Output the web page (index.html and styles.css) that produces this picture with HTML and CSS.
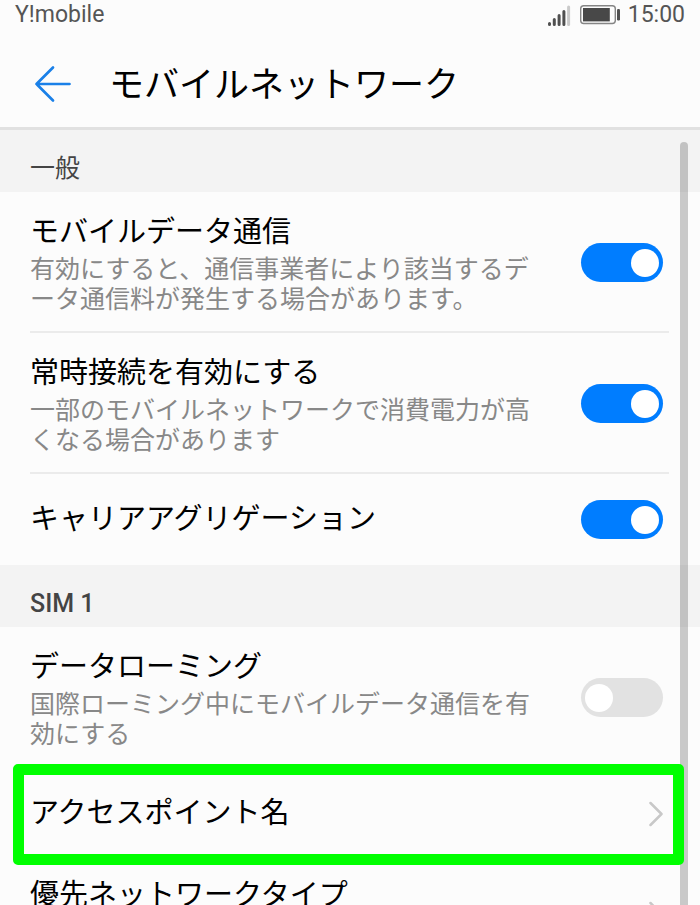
FILE: index.html
```html
<!DOCTYPE html>
<html lang="ja">
<head>
    <meta charset="utf-8">
    <meta name="viewport" content="width=device-width, initial-scale=1">
    <title>モバイルネットワーク</title>
    <link rel="stylesheet" href="styles.css">
</head>
<body>
    <div class="status-bar">
        <span class="carrier">Y!mobile</span>
        <svg class="signal" width="24" height="24" viewBox="0 0 24 24" aria-hidden="true">
            <g stroke="#505050" stroke-width="3" stroke-linecap="round">
                <path d="M2.5 20.5V21.5M7.3 16.5V21.5M12.1 12.5V21.5M16.9 8.5V21.5"/>
                <path d="M21.6 4V21.5" stroke="#cacaca"/>
            </g>
        </svg>
        <svg class="battery" width="42" height="24" viewBox="0 0 42 24" aria-hidden="true">
            <rect x="1.7" y="2.7" width="34.6" height="17.8" rx="3" fill="none" stroke="#858585" stroke-width="1.4"/>
            <rect x="4" y="5" width="26.8" height="13.4" fill="#484848"/>
            <rect x="38" y="6" width="3" height="11.5" rx="1.2" fill="#505050"/>
        </svg>
        <span class="clock">15:00</span>
    </div>

    <header class="header">
        <button class="back" type="button" aria-label="戻る">
            <svg width="38" height="38" viewBox="0 0 38 38" aria-hidden="true">
                <path d="M19 2.5L2.5 19L19 35.5M2.5 19H35.5" fill="none" stroke="#1a80e8" stroke-width="2.7" stroke-linecap="round" stroke-linejoin="round"/>
            </svg>
        </button>
        <h1>モバイルネットワーク</h1>
    </header>

    <main class="settings">
        <section>
            <h2 class="general">一般</h2>
            <label class="row">
                <span class="text">
                    <span class="name">モバイルデータ通信</span>
                    <span class="note">有効にすると、通信事業者により該当するデータ通信料が発生する場合があります。</span>
                </span>
                <input class="toggle" type="checkbox" role="switch" checked>
            </label>
            <label class="row">
                <span class="text">
                    <span class="name">常時接続を有効にする</span>
                    <span class="note">一部のモバイルネットワークで消費電力が高くなる場合があります</span>
                </span>
                <input class="toggle" type="checkbox" role="switch" checked>
            </label>
            <label class="row single">
                <span class="text">
                    <span class="name">キャリアアグリゲーション</span>
                </span>
                <input class="toggle" type="checkbox" role="switch" checked>
            </label>
        </section>

        <section>
            <h2>SIM 1</h2>
            <label class="row">
                <span class="text">
                    <span class="name">データローミング</span>
                    <span class="note">国際ローミング中にモバイルデータ通信を有効にする</span>
                </span>
                <input class="toggle" type="checkbox" role="switch">
            </label>
            <a class="row single selected" href="#apn">
                <span class="name">アクセスポイント名</span>
                <svg class="chevron" width="16" height="26" viewBox="0 0 16 26" aria-hidden="true">
                    <path d="M3.5 2L14.5 13L3.5 24"/>
                </svg>
            </a>
            <a class="row network-type" href="#network-type">
                <span class="name">優先ネットワークタイプ</span>
                <svg class="chevron" width="16" height="26" viewBox="0 0 16 26" aria-hidden="true">
                    <path d="M3.5 2L14.5 13L3.5 24"/>
                </svg>
            </a>
        </section>

        <div class="scrollbar"></div>
    </main>
</body>
</html>
```
FILE: styles.css
```css
* {
    box-sizing: border-box;
}

body {
    display: flex;
    flex-direction: column;
    height: 100vh;
    margin: 0;
    overflow: hidden;
    background-color: #fcfcfc;
    color: #000;
    font-family: Roboto, "Noto Sans CJK JP", sans-serif;
}

.status-bar {
    display: flex;
    align-items: center;
    flex-shrink: 0;
    height: 30px;
    padding: 0 15px;
    color: #555;
    font-size: 23px;
    line-height: 30px;
}

.carrier {
    flex: 1;
}

.battery {
    margin: 0 7px 0 8px;
}

.header {
    display: flex;
    align-items: center;
    flex-shrink: 0;
    height: 100px;
    padding: 10px 34px 0;
    border-bottom: 3px solid #e1e1e1;
}

.back {
    display: flex;
    padding: 0;
    border: 0;
    background: none;
}

.header h1 {
    margin: 4px 0 0 37px;
    font-size: 35px;
    font-weight: 400;
    line-height: 48px;
}

.settings {
    position: relative;
    flex: 1;
    min-height: 0;
    overflow: hidden;
}

.settings h2 {
    height: 62px;
    margin: 0;
    padding: 21px 30px 0;
    background-color: #f3f3f3;
    color: #444;
    font-size: 25px;
    font-weight: 500;
    line-height: 36px;
}

.settings .general {
    font-weight: 400;
}

.row {
    position: relative;
    display: flex;
    align-items: center;
    justify-content: space-between;
    gap: 40px;
    margin: 0 31px 0 30px;
    padding: 18px 6px 16px 0;
    border-bottom: 2px solid #ebebeb;
    color: #000;
    text-decoration: none;
}

.row.single {
    min-height: 91px;
    padding-top: 0;
    padding-bottom: 0;
    border-bottom: 0;
}

.name,
.note {
    display: block;
}

.name {
    font-size: 29px;
    line-height: 45px;
}

.note {
    color: #888;
    font-size: 25px;
    line-height: 30px;
}

.toggle {
    appearance: none;
    flex-shrink: 0;
    display: flex;
    align-items: center;
    width: 82px;
    height: 39px;
    margin: 0;
    padding: 0 4px;
    border-radius: 20px;
    background-color: #e2e2e2;
}

.toggle::before {
    content: "";
    width: 28px;
    height: 28px;
    border-radius: 50%;
    background-color: #fff;
}

.toggle:checked {
    justify-content: flex-end;
    background-color: #007dff;
}

.chevron {
    flex-shrink: 0;
    fill: none;
    stroke: #c8c8c8;
    stroke-width: 2.5;
    stroke-linecap: round;
    stroke-linejoin: round;
}

/* Green frame drawn over the row and the scrollbar */
.selected::after {
    content: "";
    position: absolute;
    inset: -4px -15px -6px -17px;
    z-index: 2;
    border: 11px solid #0f0;
    border-radius: 5px;
    pointer-events: none;
}

.network-type {
    align-items: flex-start;
    min-height: 108px;
    padding-top: 14px;
}

.network-type .chevron {
    align-self: center;
    margin-top: 5px;
}

.scrollbar {
    position: absolute;
    top: 12px;
    right: 12px;
    bottom: 0;
    z-index: 1;
    width: 8px;
    border-radius: 4px 4px 0 0;
    background-color: rgba(0, 0, 0, 0.2);
}
```
